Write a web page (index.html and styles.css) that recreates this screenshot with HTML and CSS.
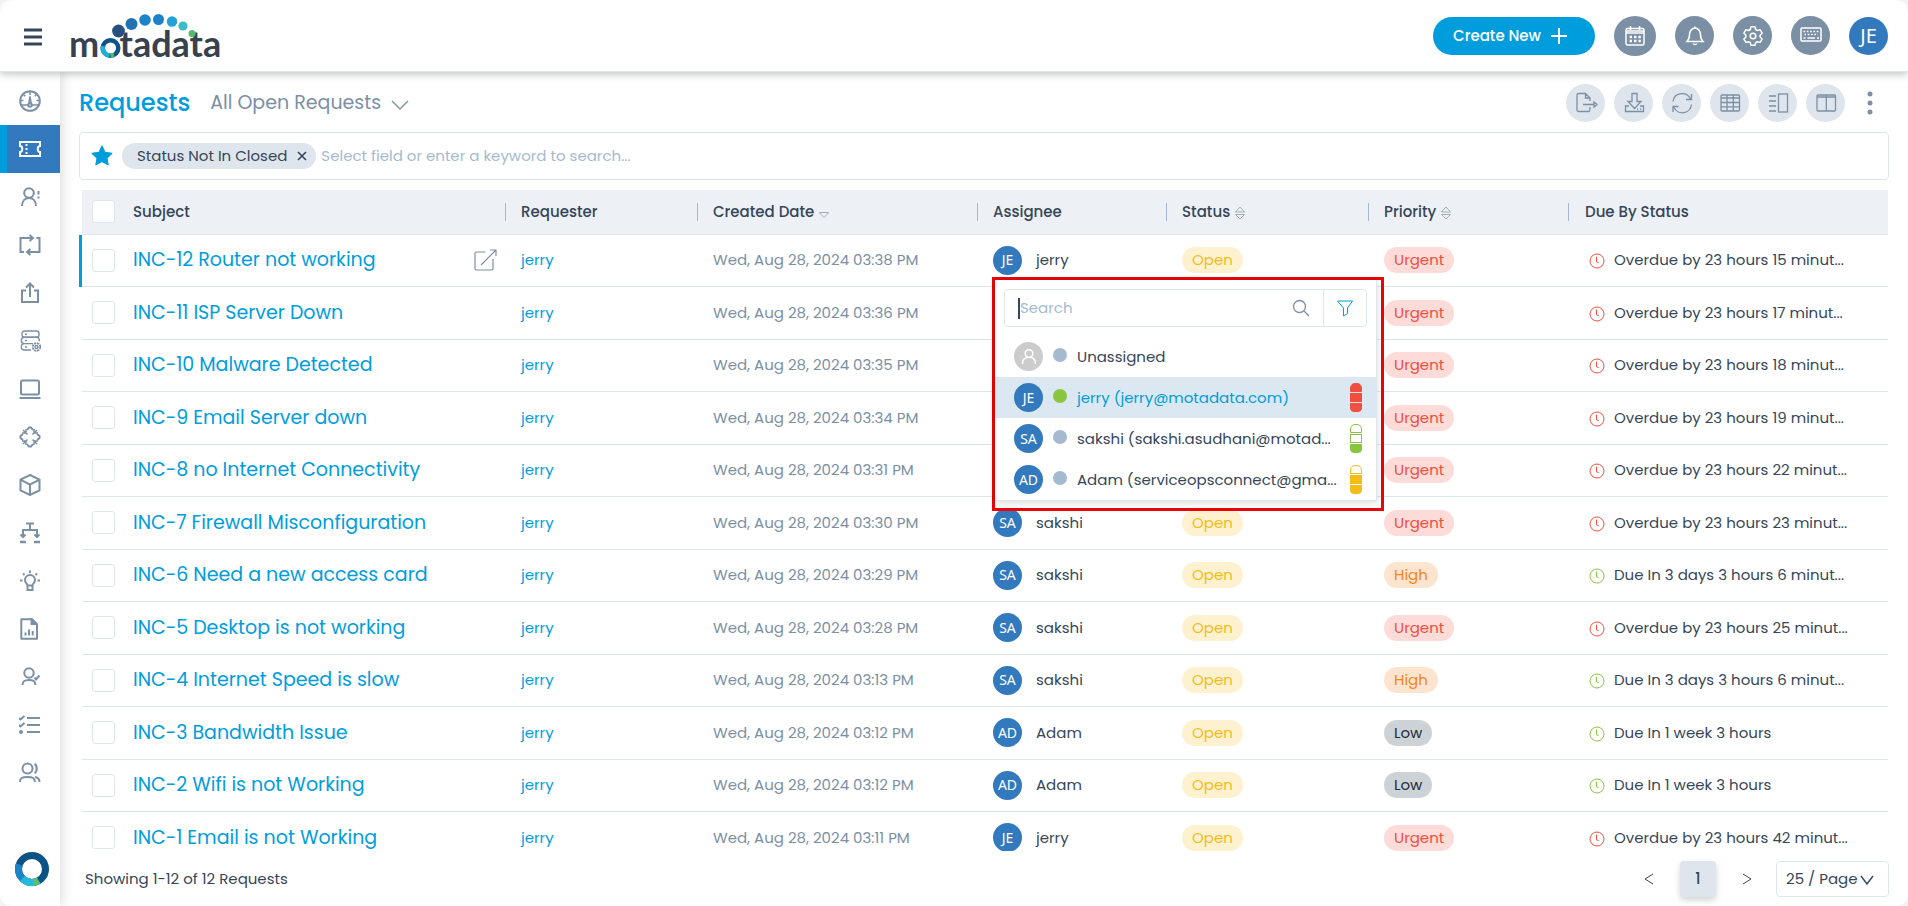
FILE: index.html
```html
<!DOCTYPE html>
<html lang="en">
<head>
<meta charset="utf-8">
<title>Requests</title>
<link rel="stylesheet" href="styles.css">
</head>
<body>
<svg class="defs" aria-hidden="true">
  <symbol id="clock" viewBox="0 0 16 16"><circle cx="8" cy="8" r="7"/><path d="M7.5 3.6v5.2l2.2.9"/></symbol>
  <symbol id="sort" viewBox="0 0 12 14"><path d="M1.500 6L6 1l4.500 5zM1.500 8.500h9L6 13z"/></symbol>
  <symbol id="down" viewBox="0 0 12 8"><path d="M1.500 1.500h9L8.500 4 6 6.500 3.500 4z"/></symbol>
</svg>
<div class="app">
  <header class="topbar">
    <button class="burger" aria-label="Menu"><svg width="18" height="18" viewBox="0 0 18 18"><path d="M0 2h18M0 9h18M0 16h18"/></svg></button>
    <a class="logo" href="#" aria-label="motadata"><svg width="160" height="60" viewBox="66 6 160 60">
      <text x="69" y="57">m<tspan fill="none">o</tspan>tadata</text>
      <g fill="none" stroke-width="4.500"><circle cx="110.500" cy="48" r="7.800" stroke="#0e5488"/><path d="M103 46a7.800 7.800 0 0 0 6.500 9.700" stroke="#1fb0dc"/><path d="M110.500 55.800l3.500-.8" stroke="#55bb6b"/></g>
      <circle cx="118.500" cy="31" r="6.400" fill="#27507f"/><circle cx="131.500" cy="24" r="6" fill="#2072b5"/><circle cx="145" cy="20" r="5.800" fill="#1c83c9"/><circle cx="158.500" cy="19.500" r="5.500" fill="#1c83c9"/><circle cx="172" cy="21.500" r="5.200" fill="#22a2d8"/><circle cx="183" cy="26" r="4.600" fill="#3bbcc8"/><circle cx="192" cy="33.500" r="3.500" fill="#55bb6b"/>
    </svg></a>
    <div class="top-actions">
      <button class="create">Create New <svg width="16" height="16" viewBox="0 0 16 16"><path d="M8 0v16M0 8h16"/></svg></button>
      <button class="round big" aria-label="Calendar"><svg width="22" height="22" viewBox="0 0 22 22"><rect x="2" y="3.500" width="18" height="16.500" rx="1.500"/><path d="M2 8h18M2 6h18M6.500 1v4M15.500 1v4"/><path stroke-width="2.400" stroke-dasharray="2.400 2" d="M5.600 12h11.500M5.600 16h11.500"/></svg></button>
      <button class="round" aria-label="Notifications"><svg width="22" height="22" viewBox="0 0 22 22"><path d="M11 1.500v1.500M3 16.500c2-2 2.500-3.500 2.500-7a5.500 6.500 0 0 1 11 0c0 3.500.5 5 2.500 7zM9.300 18.500a1.800 1.500 0 0 0 3.400 0"/></svg></button>
      <button class="round" aria-label="Settings"><svg width="22" height="22" viewBox="0 0 22 22"><circle cx="11" cy="11" r="2.800"/><path d="M9 1.800h4l.7 2.700 1.700 1 2.700-.8 2 3.500-2 2v1.800l2 2-2 3.400-2.700-.7-1.700 1-.7 2.600H9l-.7-2.600-1.700-1-2.700.7-2-3.400 2-2v-1.800l-2-2 2-3.500 2.700.8 1.700-1z" stroke-linejoin="round"/></svg></button>
      <button class="round" aria-label="Shortcuts"><svg width="22" height="22" viewBox="0 0 22 22"><rect x="1" y="3" width="20" height="13" rx="1"/><path stroke-width="1.600" stroke-dasharray="1.600 1.700" d="M3.500 6.500h15.500M4.500 9.500h13.500"/><path stroke-width="1.600" d="M3.500 13h2M7.500 13h7.500M17 13h2"/></svg></button>
      <button class="avatar user">JE</button>
    </div>
  </header>
  <div class="body">
    <nav class="side">
      <a href="#" aria-label="Dashboard"><svg viewBox="0 0 22 22"><circle cx="11" cy="11" r="9.800"/><path stroke-width="1.500" d="M2.500 15h6.500M13 15h6.500M11 2v3M4.500 4.500l1.700 1.700M17.500 4.500l-1.700 1.700M1.500 10.500h3M17.500 10.500h3M9.800 13.500L11 6.500l1.200 7z"/><circle cx="11" cy="15" r="1.800"/></svg></a>
      <a href="#" class="active" aria-label="Requests"><svg viewBox="0 0 22 22"><path stroke-width="2" d="M1 4h20v4c-3 0-3 6 0 6v4H1v-4c3 0 3-6 0-6z"/><path stroke-width="2" stroke-dasharray="2 2" d="M7.500 6v10"/></svg></a>
      <a href="#" aria-label="Problems"><svg viewBox="0 0 22 22"><circle cx="10" cy="7" r="4.800"/><path d="M3 20c0-5 3-8 7-8s7 3 7 8M19.500 5v3.500M19.500 10.500v2"/></svg></a>
      <a href="#" aria-label="Changes"><svg viewBox="0 0 22 22"><path d="M5 18H1.500V4H14M10.500 1l3.500 3-3.500 3M17.500 4h3v14H8M11.500 15L8 18l3.500 3"/></svg></a>
      <a href="#" aria-label="Releases"><svg viewBox="0 0 22 22"><path d="M7 8.500H3V20h16V8.500h-4M11 15V1.500M7 5.500l4-4 4 4"/></svg></a>
      <a href="#" aria-label="Assets"><svg viewBox="0 0 22 22"><g stroke-width="1.400"><rect x="3" y="1" width="17" height="6.300" rx="2.500"/><path d="M5.500 7.300h12a2.500 2.500 0 0 1 2.300 4M14 13.600H5.500a2.500 2.500 0 0 1 0-6.300M5.500 13.600a3 3 0 0 0 0 6.400H12M6 4.200h2M6 10.500h2M6 17h2"/><circle cx="17.500" cy="17" r="1.500"/><circle cx="17.500" cy="17" r="3.800" stroke-width="1.800" stroke-dasharray="2.200 .8"/></g></svg></a>
      <a href="#" aria-label="Computers"><svg viewBox="0 0 22 22"><rect x="2" y="2.500" width="18" height="14" rx="1.500"/><path d="M.5 20h21"/></svg></a>
      <a href="#" aria-label="Patches"><svg viewBox="0 0 22 22"><path d="M8 4l2-2.500h2L14 4M8 18l2 2.500h2l2-2.500M4 8l-2.500 2v2L4 14M18 8l2.500 2v2L18 14"/><path d="M7 3v4H3M15 3v4h4M7 19v-4H3M15 19v-4h4M4 4l4.500 4.500M18 4l-4.500 4.500M4 18l4.500-4.500M18 18l-4.500-4.500" stroke-width="1.500"/></svg></a>
      <a href="#" aria-label="Packages"><svg viewBox="0 0 22 22"><path d="M11 1l9.500 4.700v10.600L11 21l-9.500-4.700V5.700zM1.500 5.700l9.500 5 9.500-5M11 10.700V21"/></svg></a>
      <a href="#" aria-label="Workflow"><svg viewBox="0 0 22 22"><path d="M7 1.500h8M11 1.500V8M4 15V8h14v7M1.500 12.500L4 15l2.500-2.500M15.500 12.500L18 15l2.500-2.500"/><path stroke-width="2.400" d="M1 20h6M15 20h6"/></svg></a>
      <a href="#" aria-label="Knowledge"><svg viewBox="0 0 22 22"><path d="M8.500 15.500c0-2-2.500-2.500-2.500-5.500a5 5 0 0 1 10 0c0 3-2.500 3.500-2.500 5.500zM8.500 15v5h5v-5M11 .5V3M1 10.500h2.500M18.500 10.500H21M4 3.500l1.500 1.500M18 3.500L16.500 5"/></svg></a>
      <a href="#" aria-label="Reports"><svg viewBox="0 0 22 22"><path d="M2.300 1.200H13l5 5V20.700H2.300z" stroke-linejoin="round"/><path fill="currentColor" d="M12.500 1.500V6H17z"/><path d="M6.500 17.500v-3M10 17.500v-6M13.700 17.500V13"/></svg></a>
      <a href="#" aria-label="Approvals"><svg viewBox="0 0 22 22"><circle cx="10" cy="7" r="4.700"/><path d="M3.500 19c0-4 2-5 6.500-5s6 1 6.500 5M15.500 11.500l1.500 2 3.500-4"/></svg></a>
      <a href="#" aria-label="Tasks"><svg viewBox="0 0 22 22"><path d="M8 4h13M8 11h13M8 18h13M0 4l1.500 1.500L5.500 2M0 11l1.500 1.500L5.500 9"/><circle cx="2" cy="18" r="1"/></svg></a>
      <a href="#" aria-label="Users"><svg viewBox="0 0 22 22"><circle cx="8.500" cy="6.500" r="5"/><path d="M1 20c0-4 2-5 7.500-5s7 1 7.500 5M15.500 2c3 1.500 3 7.500 0 9M16 15c3 .5 4.500 2 4.500 5"/></svg></a>
      <a href="#" class="ring" aria-label="About"><svg viewBox="0 0 34 34"><g fill="none" stroke-width="7"><circle cx="17" cy="17" r="13.500" stroke="#0b5285"/><path d="M24 28.500A13.500 13.500 0 0 1 4.200 12.500" stroke="#1b84c8"/><path d="M20 30.200A13.500 13.500 0 0 1 7.500 26.500" stroke="#26b9e0"/><path d="M23.500 28.800A13.500 13.500 0 0 1 18 30.500" stroke="#5bbd6d"/></g></svg></a>
    </nav>
    <main class="content">
      <div class="title-row">
        <h1>Requests</h1>
        <button class="view">All Open Requests <svg width="18" height="10" viewBox="0 0 18 10"><path d="M1 1l8 8 8-8"/></svg></button>
        <div class="tools">
          <button class="tool" aria-label="Export"><svg viewBox="0 0 24 24"><path d="M16 10V7l-4.500-4.500H4.500A1.500 1.500 0 0 0 3 4v15a1.500 1.500 0 0 0 1.500 1.500H15c1 0 1-1 1-4.500M11.500 2.500v4.500H16M9 13.500h11M20 11l3 2.500-3 2.500z"/></svg></button>
          <button class="tool" aria-label="Download"><svg viewBox="0 0 24 24"><path d="M10 2.500h5v8h4l-6.500 7L6 10.500h4zM7 15H3.500v5.500h18V15H18M15 18h1M18 18h1"/></svg></button>
          <button class="tool" aria-label="Refresh"><svg viewBox="0 0 24 24"><path d="M3 10.500a9.200 9.200 0 0 1 17.500-2.500M21.500 3v5.500H16M21.500 13.500A9.200 9.200 0 0 1 4 16.500M3 21v-5.500h5.500"/></svg></button>
          <button class="tool" aria-label="Grid"><svg viewBox="0 0 24 24"><rect x="3" y="4" width="18.500" height="16" rx="1"/><path d="M3 7h18.500M3 11.500h18.500M3 15.800h18.500M9 4v16M15.300 4v16"/></svg></button>
          <button class="tool" aria-label="Split view"><svg viewBox="0 0 24 24"><rect x="12.500" y="3" width="9" height="18"/><path d="M3 5h7M3 10h7M3 15h7M3 20h7"/></svg></button>
          <button class="tool" aria-label="Columns"><svg viewBox="0 0 24 24"><rect x="3" y="4" width="18.500" height="16" rx="1"/><path d="M3 6h18.500M12.300 4v16"/></svg></button>
          <button class="more" aria-label="More"><svg width="6" height="24" viewBox="0 0 6 24"><circle cx="3" cy="3" r="2.500"/><circle cx="3" cy="12" r="2.500"/><circle cx="3" cy="21" r="2.500"/></svg></button>
        </div>
      </div>
      <div class="filter">
        <svg class="star" width="22" height="22" viewBox="0 0 20 20"><path d="M10 1l2.800 5.700 6.200.8-4.500 4.300 1.100 6.200L10 15l-5.600 3 1.100-6.200L1 7.500l6.200-.8z"/></svg>
        <span class="chip">Status Not In Closed <button aria-label="Remove"><svg width="10" height="10" viewBox="0 0 10 10"><path d="M1 1l8 8M9 1L1 9"/></svg></button></span>
        <input type="text" aria-label="Search requests" placeholder="Select field or enter a keyword to search...">
      </div>
      <div class="table-wrap">
        <table>
          <colgroup><col class="c-check"><col><col class="c-req"><col class="c-date"><col class="c-asg"><col class="c-status"><col class="c-pri"><col class="c-due"></colgroup>
          <thead><tr>
            <th class="ck"><input type="checkbox" aria-label="Select all"></th><th class="sep">Subject</th><th class="sep">Requester</th><th class="sep">Created Date <svg class="sort one"><use href="#down"/></svg></th><th class="sep">Assignee</th><th class="sep">Status <svg class="sort"><use href="#sort"/></svg></th><th class="sep">Priority <svg class="sort"><use href="#sort"/></svg></th><th class="due">Due By Status</th>
          </tr></thead>
          <tbody>
            <tr class="current"><td class="ck"><input type="checkbox" aria-label="Select INC-12"></td><td><div class="subject"><a href="#">INC-12 Router not working</a><svg class="open-icon" width="24" height="24" viewBox="0 0 24 24"><path d="M12.500 4H3.500A1.500 1.500 0 0 0 2 5.500v15A1.500 1.500 0 0 0 3.500 22h15a1.500 1.500 0 0 0 1.500-1.500V11M8 17L22.500 2.500M17 2h6v6"/></svg></div></td><td><a href="#">jerry</a></td><td class="date">Wed, Aug 28, 2024 03:38 PM</td>
              <td class="host"><div class="who"><span class="avatar">JE</span>jerry</div>
                <div class="picker"><div class="panel">
                  <div class="find"><input type="text" aria-label="Search assignee" placeholder="Search"><svg class="lens" width="18" height="18" viewBox="0 0 18 18"><circle cx="7.500" cy="7.500" r="6"/><path d="M12 12l5 5"/></svg><button aria-label="Filter"><svg width="18" height="18" viewBox="0 0 18 18"><path d="M1.500 2h15l-5 7v5.500L7.500 17V9z"/></svg></button></div>
                  <ul>
                    <li><span class="avatar none"><svg width="18" height="18" viewBox="0 0 18 18"><circle cx="9" cy="5.500" r="3.800"/><path d="M2.500 16c0-4.500 2.500-6.700 6.500-6.700s6.500 2.200 6.500 6.700"/></svg></span><i class="dot"></i>Unassigned</li>
                    <li class="picked"><span class="avatar">JE</span><i class="dot on"></i>jerry (jerry@motadata.com)<span class="load red"><b class="full"></b><b class="full"></b><b class="full"></b></span></li>
                    <li><span class="avatar">SA</span><i class="dot"></i>sakshi (sakshi.asudhani@motad...<span class="load green"><b></b><b></b><b class="full"></b></span></li>
                    <li><span class="avatar">AD</span><i class="dot"></i>Adam (serviceopsconnect@gma...<span class="load amber"><b></b><b class="full"></b><b class="full"></b></span></li>
                  </ul>
                </div></div>
              </td>
              <td><span class="pill open">Open</span></td><td><span class="pill urgent">Urgent</span></td><td class="due late"><svg><use href="#clock"/></svg>Overdue by 23 hours 15 minut...</td></tr>
            <tr><td class="ck"><input type="checkbox" aria-label="Select INC-11"></td><td><div class="subject"><a href="#">INC-11 ISP Server Down</a></div></td><td><a href="#">jerry</a></td><td class="date">Wed, Aug 28, 2024 03:36 PM</td><td></td><td></td><td><span class="pill urgent">Urgent</span></td><td class="due late"><svg><use href="#clock"/></svg>Overdue by 23 hours 17 minut...</td></tr>
            <tr><td class="ck"><input type="checkbox" aria-label="Select INC-10"></td><td><div class="subject"><a href="#">INC-10 Malware Detected</a></div></td><td><a href="#">jerry</a></td><td class="date">Wed, Aug 28, 2024 03:35 PM</td><td></td><td></td><td><span class="pill urgent">Urgent</span></td><td class="due late"><svg><use href="#clock"/></svg>Overdue by 23 hours 18 minut...</td></tr>
            <tr><td class="ck"><input type="checkbox" aria-label="Select INC-9"></td><td><div class="subject"><a href="#">INC-9 Email Server down</a></div></td><td><a href="#">jerry</a></td><td class="date">Wed, Aug 28, 2024 03:34 PM</td><td></td><td></td><td><span class="pill urgent">Urgent</span></td><td class="due late"><svg><use href="#clock"/></svg>Overdue by 23 hours 19 minut...</td></tr>
            <tr><td class="ck"><input type="checkbox" aria-label="Select INC-8"></td><td><div class="subject"><a href="#">INC-8 no Internet Connectivity</a></div></td><td><a href="#">jerry</a></td><td class="date">Wed, Aug 28, 2024 03:31 PM</td><td></td><td></td><td><span class="pill urgent">Urgent</span></td><td class="due late"><svg><use href="#clock"/></svg>Overdue by 23 hours 22 minut...</td></tr>
            <tr><td class="ck"><input type="checkbox" aria-label="Select INC-7"></td><td><div class="subject"><a href="#">INC-7 Firewall Misconfiguration</a></div></td><td><a href="#">jerry</a></td><td class="date">Wed, Aug 28, 2024 03:30 PM</td><td><div class="who"><span class="avatar">SA</span>sakshi</div></td><td><span class="pill open">Open</span></td><td><span class="pill urgent">Urgent</span></td><td class="due late"><svg><use href="#clock"/></svg>Overdue by 23 hours 23 minut...</td></tr>
            <tr><td class="ck"><input type="checkbox" aria-label="Select INC-6"></td><td><div class="subject"><a href="#">INC-6 Need a new access card</a></div></td><td><a href="#">jerry</a></td><td class="date">Wed, Aug 28, 2024 03:29 PM</td><td><div class="who"><span class="avatar">SA</span>sakshi</div></td><td><span class="pill open">Open</span></td><td><span class="pill high">High</span></td><td class="due"><svg><use href="#clock"/></svg>Due In 3 days 3 hours 6 minut...</td></tr>
            <tr><td class="ck"><input type="checkbox" aria-label="Select INC-5"></td><td><div class="subject"><a href="#">INC-5 Desktop is not working</a></div></td><td><a href="#">jerry</a></td><td class="date">Wed, Aug 28, 2024 03:28 PM</td><td><div class="who"><span class="avatar">SA</span>sakshi</div></td><td><span class="pill open">Open</span></td><td><span class="pill urgent">Urgent</span></td><td class="due late"><svg><use href="#clock"/></svg>Overdue by 23 hours 25 minut...</td></tr>
            <tr><td class="ck"><input type="checkbox" aria-label="Select INC-4"></td><td><div class="subject"><a href="#">INC-4 Internet Speed is slow</a></div></td><td><a href="#">jerry</a></td><td class="date">Wed, Aug 28, 2024 03:13 PM</td><td><div class="who"><span class="avatar">SA</span>sakshi</div></td><td><span class="pill open">Open</span></td><td><span class="pill high">High</span></td><td class="due"><svg><use href="#clock"/></svg>Due In 3 days 3 hours 6 minut...</td></tr>
            <tr><td class="ck"><input type="checkbox" aria-label="Select INC-3"></td><td><div class="subject"><a href="#">INC-3 Bandwidth Issue</a></div></td><td><a href="#">jerry</a></td><td class="date">Wed, Aug 28, 2024 03:12 PM</td><td><div class="who"><span class="avatar">AD</span>Adam</div></td><td><span class="pill open">Open</span></td><td><span class="pill low">Low</span></td><td class="due"><svg><use href="#clock"/></svg>Due In 1 week 3 hours</td></tr>
            <tr><td class="ck"><input type="checkbox" aria-label="Select INC-2"></td><td><div class="subject"><a href="#">INC-2 Wifi is not Working</a></div></td><td><a href="#">jerry</a></td><td class="date">Wed, Aug 28, 2024 03:12 PM</td><td><div class="who"><span class="avatar">AD</span>Adam</div></td><td><span class="pill open">Open</span></td><td><span class="pill low">Low</span></td><td class="due"><svg><use href="#clock"/></svg>Due In 1 week 3 hours</td></tr>
            <tr><td class="ck"><input type="checkbox" aria-label="Select INC-1"></td><td><div class="subject"><a href="#">INC-1 Email is not Working</a></div></td><td><a href="#">jerry</a></td><td class="date">Wed, Aug 28, 2024 03:11 PM</td><td><div class="who"><span class="avatar">JE</span>jerry</div></td><td><span class="pill open">Open</span></td><td><span class="pill urgent">Urgent</span></td><td class="due late"><svg><use href="#clock"/></svg>Overdue by 23 hours 42 minut...</td></tr>
          </tbody>
        </table>
      </div>
      <footer class="pager">
        <span>Showing 1-12 of 12 Requests</span>
        <div class="pages">
          <button aria-label="Previous page"><svg width="10" height="12" viewBox="0 0 10 12"><path d="M9 1L1 6l8 5"/></svg></button>
          <button class="page">1</button>
          <button aria-label="Next page"><svg width="10" height="12" viewBox="0 0 10 12"><path d="M1 1l8 5-8 5"/></svg></button>
          <div class="size"><select aria-label="Page size"><option>25 / Page</option></select><svg width="14" height="10" viewBox="0 0 14 10"><path d="M1 1l6 8 6-8"/></svg></div>
        </div>
      </footer>
    </main>
  </div>
</div>
</body>
</html>
```
FILE: styles.css
```css
* { box-sizing: border-box; }
html { height: 100%; }
body {
  margin: 0;
  height: 100%;
  background: #f3f3f4;
  color: #364658;
  font: 400 15px/24px Poppins, Inter, "Open Sans", sans-serif;
}
button, input, select { font: inherit; color: inherit; }
button { border: 0; padding: 0; background: none; display: inline-flex; align-items: center; justify-content: center; }
a { color: #009ddc; text-decoration: none; }
svg { fill: none; stroke: currentColor; flex: none; }
.defs { position: absolute; width: 0; height: 0; }

.app { height: 100vh; display: flex; flex-direction: column; background: #fff; border-radius: 12px; overflow: hidden; }

.topbar {
  position: relative;
  z-index: 2;
  height: 72px;
  display: flex;
  align-items: center;
  padding: 0 20px 0 23px;
  background: #fff;
  border-bottom: 1px solid #dee5ed;
  box-shadow: 0 2px 8px rgba(0, 0, 0, .25);
}
.burger { width: 20px; height: 32px; padding-top: 2px; }
.burger svg { stroke: #364658; stroke-width: 3; }
.logo { margin-left: 23px; display: flex; }
.logo text { font: 700 36px Lato, "Open Sans", sans-serif; fill: #38424f; stroke: none; }
.logo svg { stroke: none; overflow: visible; }
.top-actions { margin-left: auto; display: flex; align-items: center; }
.create { height: 38px; padding: 0 28px 0 20px; gap: 10px; border-radius: 19px; background: #009ddc; color: #fff; font-weight: 500; }
.create svg { stroke-width: 2; }
.round { width: 39px; height: 39px; margin-left: 19px; border-radius: 50%; background: #7b8fa5; color: #fff; }
.round.big { width: 42px; height: 40px; }
.round svg { stroke-width: 1.5; }
.avatar {
  width: 29px;
  height: 29px;
  flex: none;
  display: inline-flex;
  align-items: center;
  justify-content: center;
  border-radius: 50%;
  background: #3279be;
  color: #fff;
  font: 400 14px/20px "Noto Sans", "Open Sans", sans-serif;
}
.avatar.user { width: 39px; height: 38px; margin-left: 19px; font-size: 20px; }
.avatar.none { background: #ccc; }
.avatar svg { stroke-width: 1.5; }

.body { flex: 1; min-height: 0; display: flex; }
.side {
  width: 60px;
  flex: none;
  display: flex;
  flex-direction: column;
  padding: 5px 0 20px;
  background: #fff;
  box-shadow: 2px 0 12px rgba(0, 0, 0, .14);
}
.side a { height: 48px; flex: none; display: flex; align-items: center; justify-content: center; color: #7b8fa5; }
.side svg { width: 22px; height: 22px; stroke-width: 2; }
.side .active { background: #3279be; color: #fff; border-left: 7px solid #009ddc; padding-right: 7px; }
.side .ring { height: 34px; margin-top: auto; padding-left: 4px; }
.side .ring svg { width: 34px; height: 34px; }

.content { flex: 1; min-width: 0; display: flex; flex-direction: column; padding: 0 19px; }
.title-row { height: 60px; flex: none; display: flex; align-items: center; padding-top: 2px; }
h1 { margin: 0; font: 500 24px/32px Poppins, Inter, sans-serif; color: #009ddc; }
.view { margin-left: 20px; gap: 10px; font-size: 19px; color: #7b8fa5; }
.view svg { stroke-width: 1.3; margin-top: 4px; }
.tools { margin-left: auto; display: flex; gap: 9px; color: #7b8fa5; }
.tool { width: 39px; height: 38px; border-radius: 50%; background: #dee5ed; }
.tool svg { width: 24px; height: 24px; stroke-width: 1.3; }
.more { width: 31px; margin-right: 4px; }
.more svg { fill: currentColor; stroke: none; }

.filter { height: 48px; flex: none; display: flex; align-items: center; padding: 0 11px; border: 1px solid #dee5ed; border-radius: 4px; }
.star { fill: #009ddc; stroke: #009ddc; stroke-linejoin: round; }
.chip { height: 26px; margin-left: 9px; padding: 0 9px 0 15px; display: flex; align-items: center; gap: 10px; border-radius: 13px; background: #dee5ed; white-space: nowrap; }
.chip svg { stroke-width: 1.6; }
.filter input { flex: 1; min-width: 0; margin-left: 5px; padding: 0; border: 0; outline: 0; background: none; }
::placeholder { color: #a5bad0; opacity: 1; }

.table-wrap { flex: 1; min-height: 0; margin-top: 10px; overflow: hidden; }
table { width: 100%; table-layout: fixed; border-collapse: separate; border-spacing: 0; border-left: 3px solid transparent; border-right: 1px solid transparent; }
.c-check { width: 36px; }
.c-req { width: 192px; }
.c-date { width: 280px; }
.c-asg { width: 189px; }
.c-status { width: 202px; }
.c-pri { width: 200px; }
.c-due { width: 319px; }
th { height: 45px; padding: 0 0 0 15px; background: #edf1f6; border-bottom: 1px solid #dee5ed; font-weight: 500; text-align: left; white-space: nowrap; }
.sep { background: linear-gradient(#a5bad0, #a5bad0) right center / 1px 18px no-repeat #edf1f6; }
td { height: 52px; padding: 0 0 1px 15px; border-bottom: 1px solid #dee5ed; white-space: nowrap; }
tr:nth-child(even) td { height: 53px; }
.current .ck { box-shadow: -3px 0 #009ddc; }
.ck { padding: 0 0 1px 10px; line-height: 0; }
.ck input { appearance: none; width: 23px; height: 23px; margin: 0; border: 1px solid #dee5ed; border-radius: 3px; background: #fff; vertical-align: middle; }
.sort { width: 12px; height: 14px; color: #a3adb8; vertical-align: -3px; }
.sort.one { height: 8px; vertical-align: -2px; }
.subject { display: flex; align-items: center; justify-content: space-between; padding-right: 9px; font-size: 19px; }
.open-icon { color: #7b8fa5; stroke-width: 1.2; }
.date { color: #7b8fa5; }
.who { display: flex; align-items: center; gap: 14px; }
.pill { display: inline-block; height: 26px; padding: 0 10px; border-radius: 13px; line-height: 26px; vertical-align: middle; }
.open { background: #fef1d0; color: #f5bc18; }
.urgent { background: #fcdbd8; color: #f04e3e; }
.high { background: #fde4cf; color: #f58518; }
.low { background: #cdd2d6; color: #1f2d3a; }
th.due { padding-left: 16px; }
td.due { padding-left: 20px; }
.due svg { width: 16px; height: 16px; margin-right: 9px; vertical-align: -4px; color: #89c540; }
.late svg { color: #f04e3e; }

.host { position: relative; }
.picker { position: absolute; z-index: 3; left: 14px; top: 42px; width: 392px; border: 3px solid #e90606; padding: 0 4px 7px 0; }
.panel { background: #fff; border: 1px solid #dee5ed; border-width: 0 1px 1px 0; box-shadow: 0 2px 8px rgba(0, 0, 0, .15); padding-top: 9px; }
.find { height: 38px; margin: 0 9px; display: flex; align-items: center; border: 1px solid #dee5ed; border-radius: 4px; }
.find input { flex: 1; min-width: 0; height: 21px; margin-left: 13px; padding: 0; border: 0; border-left: 2px solid #364658; outline: 0; background: none; }
.lens { margin-right: 13px; color: #7b8fa5; stroke-width: 1.3; }
.find button { width: 43px; height: 36px; border-left: 1px solid #dee5ed; color: #009ddc; }
.picker ul { list-style: none; margin: 9px 0 0; padding: 0; }
.picker li { height: 41px; display: flex; align-items: center; padding: 0 14px 0 19px; }
.picked { background: #dbe8f1; color: #009ddc; }
.dot { width: 14px; height: 14px; margin: 0 10px; margin-bottom: 4px; border-radius: 50%; background: #a5bad0; }
.dot.on { background: #89c540; }
.load { width: 12px; height: 29px; margin-left: auto; display: flex; flex-direction: column; gap: 1px; }
.load b { flex: 1; border: 1px solid; }
.load b:first-child { border-radius: 5px 5px 0 0; }
.load b:last-child { border-radius: 0 0 4px 4px; }
.full { background: currentColor; }
.red { color: #f04e3e; }
.green { color: #89c540; }
.amber { color: #f5bc18; }

.pager { height: 55px; flex: none; display: flex; align-items: center; justify-content: space-between; padding-left: 6px; }
.pages { display: flex; align-items: center; }
.pages button { width: 38px; height: 36px; }
.pages .page { width: 36px; margin: 0 12px; border-radius: 4px; background: #dee5ed; box-shadow: 0 3px 6px rgba(0, 0, 0, .18); font-weight: 500; }
.size { position: relative; margin-left: 10px; width: 113px; height: 36px; border: 1px solid #dee5ed; border-radius: 4px; }
.size select { width: 100%; height: 34px; padding: 0 9px; border: 0; background: none; appearance: none; }
.size svg { position: absolute; right: 14px; top: 13px; pointer-events: none; stroke-width: 1.4; }
```
